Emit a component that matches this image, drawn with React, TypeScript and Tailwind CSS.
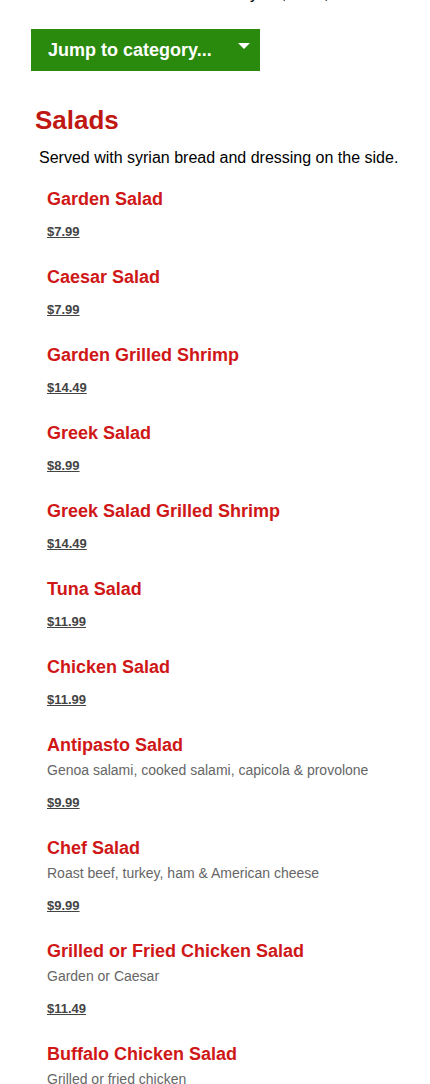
type Item = { name: string; price: string; note?: string };

const items: Item[] = [
  { name: "Garden Salad", price: "$7.99" },
  { name: "Caesar Salad", price: "$7.99" },
  { name: "Garden Grilled Shrimp", price: "$14.49" },
  { name: "Greek Salad", price: "$8.99" },
  { name: "Greek Salad Grilled Shrimp", price: "$14.49" },
  { name: "Tuna Salad", price: "$11.99" },
  { name: "Chicken Salad", price: "$11.99" },
  { name: "Antipasto Salad", price: "$9.99", note: "Genoa salami, cooked salami, capicola & provolone" },
  { name: "Chef Salad", price: "$9.99", note: "Roast beef, turkey, ham & American cheese" },
  { name: "Grilled or Fried Chicken Salad", price: "$11.49", note: "Garden or Caesar" },
  { name: "Buffalo Chicken Salad", price: "", note: "Grilled or fried chicken" },
];

function MenuItem({ item }: { item: Item }) {
  return (
    <li>
      <h3 className="text-[18px] leading-[26px] font-bold text-[#cf1717]">{item.name}</h3>
      {item.note && <p className="text-sm leading-[25px] text-[#666666]">{item.note}</p>}
      {item.price && (
        <p className="mt-[10px] text-[13px] leading-5 font-bold text-[#444444] underline">{item.price}</p>
      )}
    </li>
  );
}

export default function App() {
  return (
    <main className="h-screen overflow-hidden bg-white font-['Liberation_Sans',Arial,sans-serif] text-black">
      <div className="h-[29px] overflow-hidden pl-[250px]">
        <p aria-hidden="true" className="-mt-4 flex text-base leading-5">
          <span className="w-8">y</span>
          <span className="w-[42px]">,</span>
          <span>,</span>
        </p>
      </div>
      <div className="px-[31px]">
        <div className="relative w-fit">
          <select
            aria-label="Jump to category"
            className="block h-[42px] w-[229px] appearance-none bg-[#2a8a0d] px-[17px] text-[18px] font-bold text-white"
          >
            <option>Jump to category...</option>
            <option>Salads</option>
          </select>
          <svg aria-hidden="true" viewBox="0 0 12 6" className="pointer-events-none absolute top-[14px] right-[10px] h-[6px] w-3 fill-white">
            <path d="M0 0H12L6 6Z" />
          </svg>
        </div>
      </div>
      <section className="pt-[31px] pr-4 pl-[35px]">
        <h2 className="text-[26px] leading-9 font-bold text-[#bf1813]">Salads</h2>
        <p className="mt-2 pl-1 text-base leading-6">Served with syrian bread and dressing on the side.</p>
        <ul className="mt-4 flex flex-col gap-[22px] pl-3">
          {items.map((item) => (
            <MenuItem key={item.name} item={item} />
          ))}
        </ul>
      </section>
    </main>
  );
}
